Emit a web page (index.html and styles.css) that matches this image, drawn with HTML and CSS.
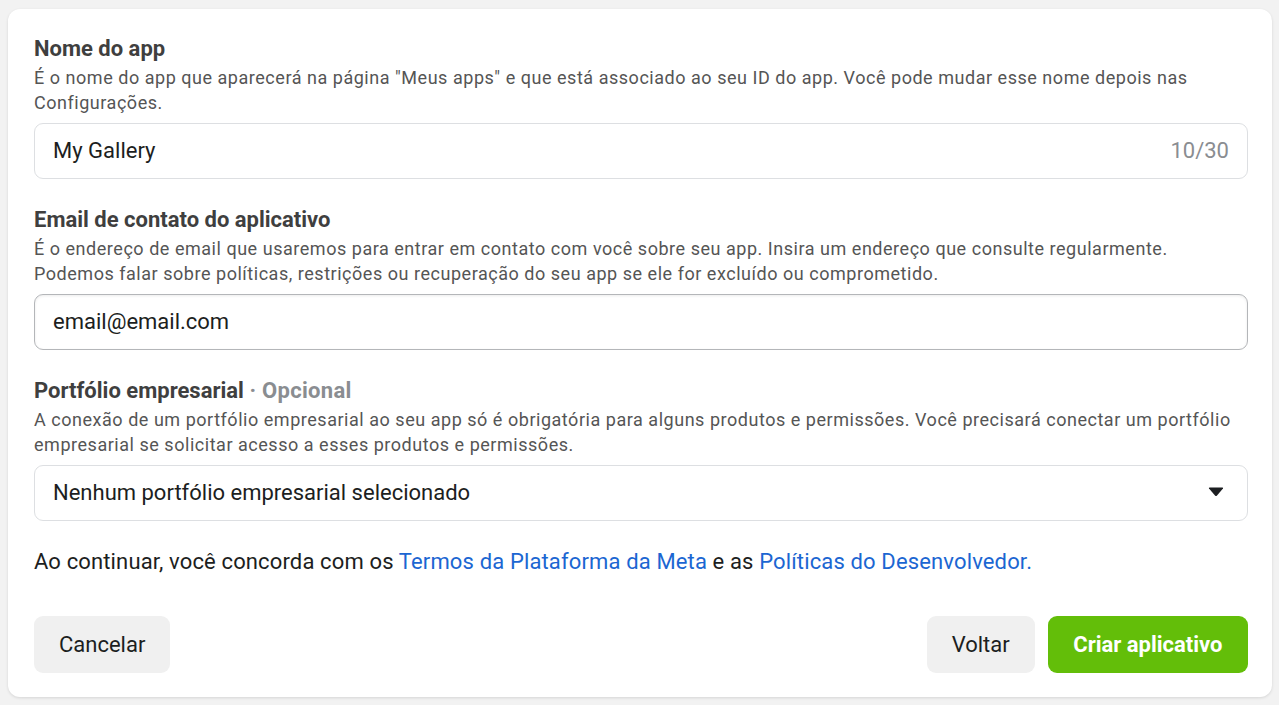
FILE: index.html
```html
<!DOCTYPE html>
<html lang="pt-BR">
  <head>
    <meta charset="UTF-8" />
    <meta name="viewport" content="width=device-width, initial-scale=1.0" />
    <title>Criar aplicativo</title>
    <link rel="stylesheet" href="styles.css">
  </head>
  <body>
    <div class="card">
      <div class="field">
        <div class="label">Nome do app</div>
        <p class="hint">
          É o nome do app que aparecerá na página "Meus apps" e que está associado ao seu ID do app. Você pode mudar esse nome depois nas Configurações.
        </p>
        <div class="input">
          <span class="value">My Gallery</span>
          <span class="counter">10/30</span>
        </div>
      </div>

      <div class="field">
        <div class="label">Email de contato do aplicativo</div>
        <p class="hint">
          É o endereço de email que usaremos para entrar em contato com você sobre seu app. Insira um endereço que consulte regularmente. Podemos falar sobre políticas, restrições ou recuperação do seu app se ele for excluído ou comprometido.
        </p>
        <div class="input focused">
          <span class="value">email@email.com</span>
        </div>
      </div>

      <div class="field">
        <div class="label">Portfólio empresarial <span class="optional">· Opcional</span></div>
        <p class="hint">
          A conexão de um portfólio empresarial ao seu app só é obrigatória para alguns produtos e permissões. Você precisará conectar um portfólio empresarial se solicitar acesso a esses produtos e permissões.
        </p>
        <div class="input select">
          <span class="value">Nenhum portfólio empresarial selecionado</span>
          <svg class="caret" width="16" height="10" viewBox="0 0 16 10">
            <path d="M1 1.5 Q0.5 0.5 1.8 0.5 L14.2 0.5 Q15.5 0.5 15 1.5 L9 8.6 Q8 9.6 7 8.6 Z" fill="#1c1e21" />
          </svg>
        </div>
      </div>

      <p class="terms">
        Ao continuar, você concorda com os <a href="#">Termos da Plataforma da Meta</a> e as <a href="#">Políticas do Desenvolvedor.</a>
      </p>

      <div class="actions">
        <button class="btn">Cancelar</button>
        <div class="right">
          <button class="btn">Voltar</button>
          <button class="btn primary">Criar aplicativo</button>
        </div>
      </div>
    </div>
  </body>
</html>
```

FILE: styles.css
```css
body {
  margin: 0;
  padding: 9px 7px 8px 8px;
  background-color: #f2f2f2;
  font-family: Roboto, 'Noto Sans', sans-serif;
  color: #1c1e21;
}
.card {
  background-color: #ffffff;
  border-radius: 12px;
  box-shadow: 0 1px 3px rgba(0, 0, 0, 0.12);
  padding: 27px 24px 24px 26px;
}
.field {
  margin-bottom: 28px;
}
.label {
  font-size: 22px;
  line-height: 26px;
  font-weight: 700;
  color: #3f3f3f;
}
.optional {
  color: #8a8d91;
  letter-spacing: 0.3px;
}
.hint {
  margin: 3px 0 0;
  font-size: 18px;
  line-height: 25px;
  letter-spacing: 0.53px;
  color: #555555;
}
.input {
  margin-top: 8px;
  height: 56px;
  box-sizing: border-box;
  border: 1px solid #dddfe2;
  border-radius: 9px;
  padding: 0 18px 2px;
  display: flex;
  align-items: center;
  justify-content: space-between;
  font-size: 22px;
}
.input.focused {
  border: 1.5px solid #b4b6b9;
  box-shadow: inset 0 1px 3px rgba(0, 0, 0, 0.08);
}
.counter {
  color: #8a8d91;
}
.select {
  padding-right: 23px;
}
.caret {
  display: block;
}
.terms {
  margin: 0;
  font-size: 22px;
  line-height: 26px;
  letter-spacing: 0.14px;
  color: #1c1e21;
}
.terms a {
  color: #1b66d2;
  text-decoration: none;
}
.actions {
  margin-top: 41px;
  display: flex;
  justify-content: space-between;
}
.right {
  display: flex;
  gap: 13px;
}
.btn {
  height: 57px;
  padding: 0 25px;
  border: none;
  border-radius: 9px;
  background-color: #f0f0f0;
  color: #1c1e21;
  font-family: Roboto, 'Noto Sans', sans-serif;
  font-size: 22px;
  cursor: pointer;
}
.btn.primary {
  background-color: #63be09;
  color: #ffffff;
  font-weight: 700;
  padding: 0 25.5px;
}
```
